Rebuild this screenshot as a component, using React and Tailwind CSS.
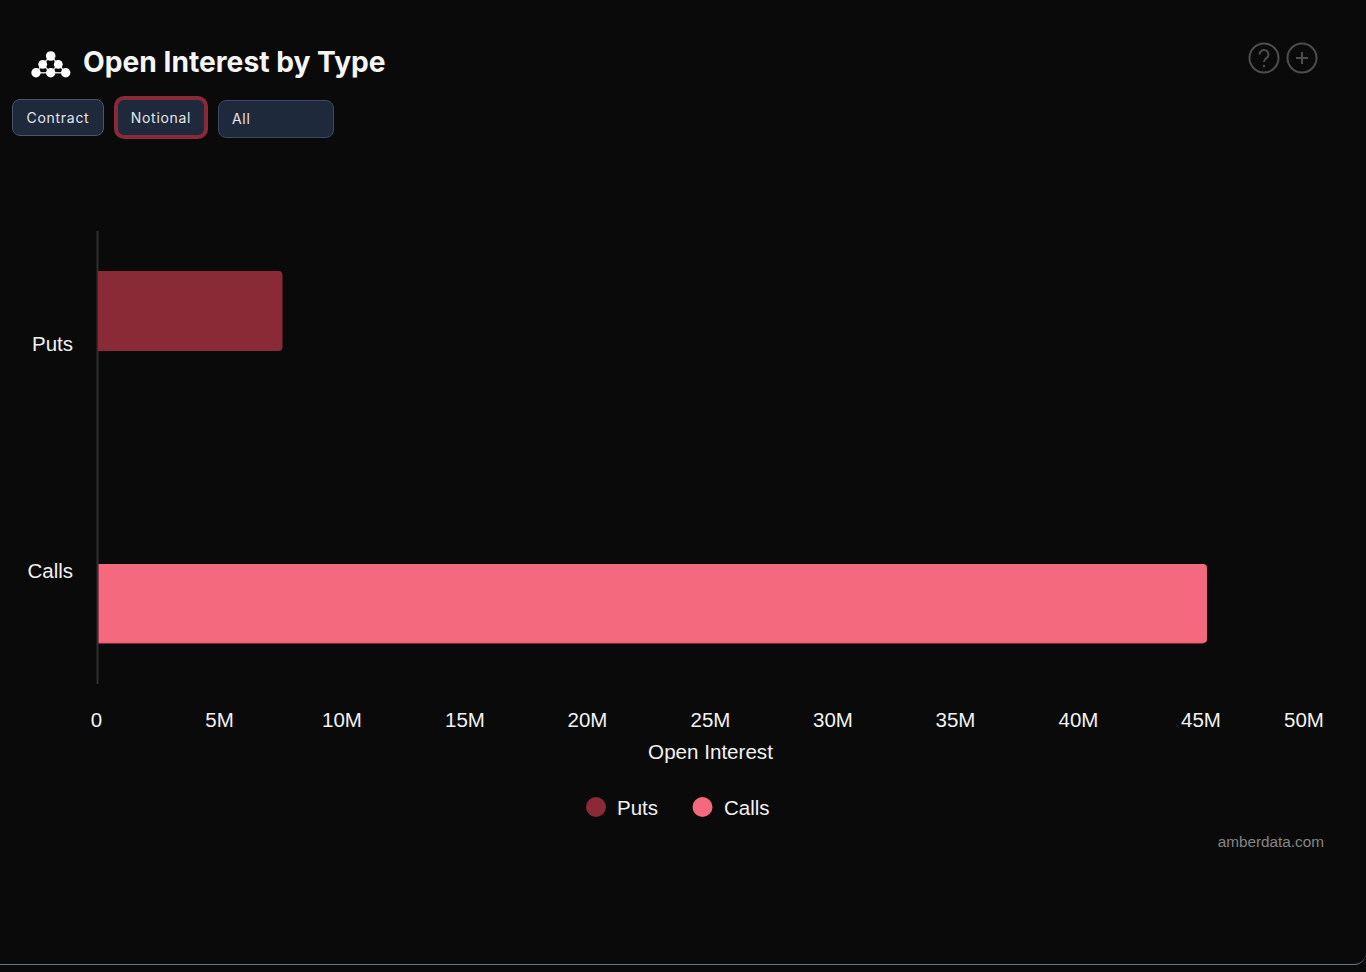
import React from 'react';

const ticks = [
  ['0', 96.5], ['5M', 219.5], ['10M', 342], ['15M', 465], ['20M', 587.5], ['25M', 710.5],
  ['30M', 833], ['35M', 955.5], ['40M', 1078.5], ['45M', 1201], ['50M', 1304],
];

const Logo = () => (
  <svg width="40" height="30" viewBox="0 0 40 30" className="shrink-0 mt-[2px]">
    <path d="M19.7 8 L11.7 16.3 M19.7 8 L27.3 16.3 M11.7 16.3 L5 24.7 M11.7 16.3 L19.7 24.7 M27.3 16.3 L19.7 24.7 M27.3 16.3 L34.7 24.7 M5 24.7 L34.7 24.7" stroke="#d4d4d4" strokeWidth="1.6" />
    <g fill="#fff">
      <circle cx="19.7" cy="8" r="4.8" />
      <circle cx="11.7" cy="16.3" r="4.4" />
      <circle cx="27.3" cy="16.3" r="4.4" />
      <circle cx="5" cy="24.7" r="4.7" />
      <circle cx="19.7" cy="24.7" r="4.7" />
      <circle cx="34.7" cy="24.7" r="4.7" />
    </g>
  </svg>
);

const Help = () => (
  <svg width="32" height="32" viewBox="0 0 32 32">
    <circle cx="16" cy="16" r="14.5" fill="none" stroke="#4d4d4d" strokeWidth="2" />
    <path d="M11.5 12.5a4.5 4.5 0 1 1 7 3.7c-1.5 1-2.5 1.8-2.5 3.8" fill="none" stroke="#4d4d4d" strokeWidth="2" />
    <circle cx="16" cy="24" r="1.3" fill="#4d4d4d" />
  </svg>
);

const Plus = () => (
  <svg width="32" height="32" viewBox="0 0 32 32">
    <circle cx="16" cy="16" r="14.5" fill="none" stroke="#4d4d4d" strokeWidth="2" />
    <path d="M16 10v12M10 16h12" fill="none" stroke="#4d4d4d" strokeWidth="2" />
  </svg>
);

const Chart = () => (
  <svg viewBox="0 150 1366 710" className="block w-[1366px] h-[710px]" fontFamily="'Liberation Sans', Arial, sans-serif">
    <line x1="97.5" y1="231" x2="97.5" y2="684" stroke="#2f2f2f" strokeWidth="2" />
    <path d="M98 271H278.5a4 4 0 0 1 4 4V347a4 4 0 0 1-4 4H98Z" fill="#8b2a37" />
    <path d="M98.5 564H1203a4 4 0 0 1 4 4V639a4 4 0 0 1-4 4H98.5Z" fill="#f5697f" />
    <path d="M98.5 643H1203" stroke="#d9566c" strokeWidth="1" />

    <text x="73" y="351" textAnchor="end" fontSize="20.5" fill="#f2f2f2">Puts</text>
    <text x="73" y="578" textAnchor="end" fontSize="20.5" fill="#f2f2f2">Calls</text>

    {ticks.map(([label, x]) => (
      <text key={label} x={x} y="727" textAnchor="middle" fontSize="20.5" fill="#f2f2f2">{label}</text>
    ))}
    <text x="710.5" y="759" textAnchor="middle" fontSize="20.6" fill="#f2f2f2">Open Interest</text>

    <circle cx="596" cy="807" r="10" fill="#8b2a37" />
    <text x="617" y="815" fontSize="20.5" fill="#f2f2f2">Puts</text>
    <circle cx="702.5" cy="807" r="10" fill="#f5697f" />
    <text x="724" y="815" fontSize="20.5" fill="#f2f2f2">Calls</text>

    <text x="1324" y="847" textAnchor="end" fontSize="15.3" fill="#858585">amberdata.com</text>
  </svg>
);

export default function App() {
  return (
    <div className="h-[972px] bg-[#0a0a0a] font-['Inter',sans-serif] overflow-hidden">
      <div className="h-[965px] border-b border-[#6b7688] rounded-br-xl">
        <div className="flex items-center justify-between pl-[31px] pr-[48px] h-[95px] pt-[28px]">
          <div className="flex items-center gap-[12px]">
            <Logo />
            <h1 className="text-[28.2px] leading-[36px] font-bold text-[#f5f5f5]">Open Interest by Type</h1>
          </div>
          <div className="flex items-center gap-[6px] -mt-[8px]">
            <Help />
            <Plus />
          </div>
        </div>

        <div className="flex items-center pl-[12px] h-[45px]">
          <button className="w-[92px] h-[37px] rounded-lg bg-[#1e293b] border border-[#475569] text-sm tracking-wider text-[#e5e7eb]">Contract</button>
          <button className="ml-[14px] w-[86px] h-[35px] rounded-md bg-[#1e293b] ring-4 ring-[#8b2a37] text-sm tracking-wider text-[#e5e7eb]">Notional</button>
          <div className="ml-[14px] w-[116px] h-[38px] mt-[2px] rounded-lg bg-[#1e293b] border border-[#3b4a60] text-sm tracking-wider text-[#e5e7eb] flex items-center pl-[13px]">All</div>
        </div>

        <div className="mt-[10px]">
          <Chart />
        </div>
      </div>
    </div>
  );
}
